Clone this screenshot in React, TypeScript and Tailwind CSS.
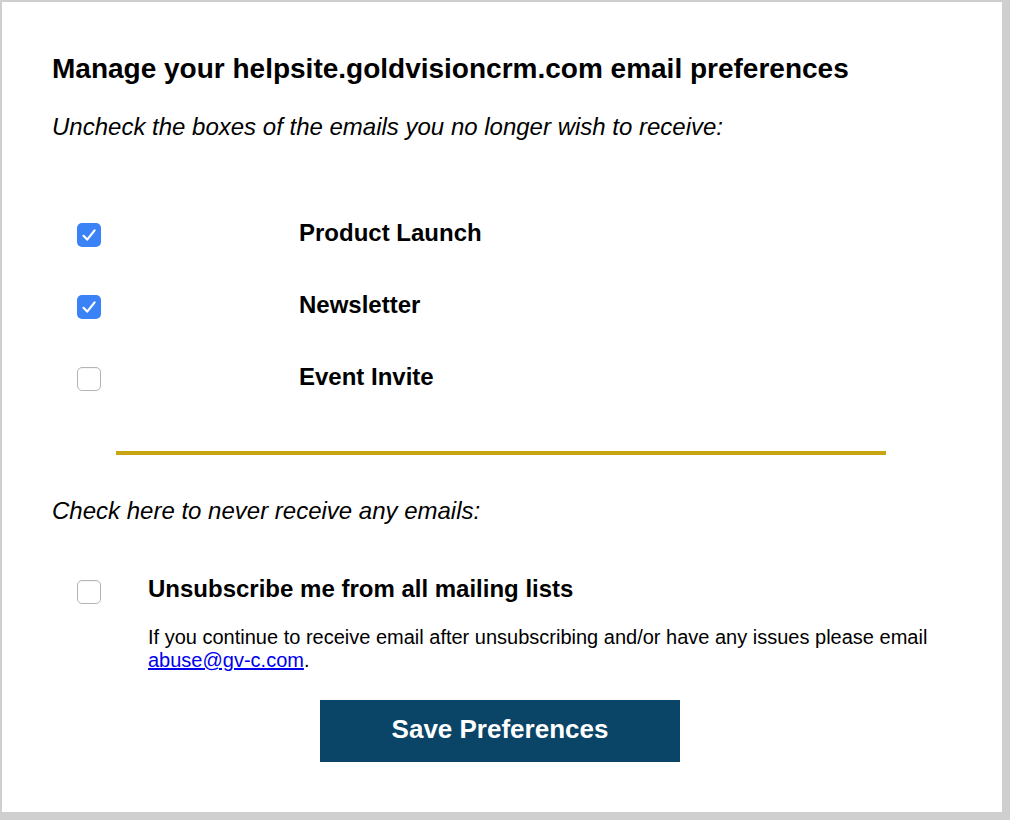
import React from "react";

const font = { fontFamily: '"Liberation Sans", Arial, Helvetica, sans-serif' };

function Box({ checked }: { checked: boolean }) {
  if (checked)
    return (
      <span className="mt-[4px] ml-[25px] flex h-[24px] w-[24px] shrink-0 items-center justify-center rounded-[5px] bg-[#3b82f6]">
        <svg width="24" height="24" viewBox="0 0 24 24" fill="none">
          <path d="M6.5 12.8 L10.2 16.6 L17.6 7.4" stroke="white" strokeWidth="2.2" strokeLinecap="round" strokeLinejoin="round" />
        </svg>
      </span>
    );
  return (
    <span className="mt-[4px] ml-[25px] block h-[24px] w-[24px] shrink-0 rounded-[5px] border border-[#b4b4b4] bg-white shadow-[inset_0_1px_1px_rgba(0,0,0,0.04)]" />
  );
}

const topics = [
  { name: "Product Launch", checked: true },
  { name: "Newsletter", checked: true },
  { name: "Event Invite", checked: false },
];

export default function App() {
  return (
    <div className="h-[820px] w-[1010px] bg-[#cfcfcf] pl-[2px] pt-[2px] pr-[8px] pb-[8px]" style={font}>
      <div className="h-full w-full bg-white pl-[50px] pr-[40px] pt-[51px] text-black">
        <h1 className="text-[28px] font-bold leading-[32px]">
          Manage your helpsite.goldvisioncrm.com email preferences
        </h1>
        <p className="mt-[28px] text-[24px] italic leading-[28px]">
          Uncheck the boxes of the emails you no longer wish to receive:
        </p>

        <div className="mt-[78px] flex flex-col gap-[44px]">
          {topics.map((t) => (
            <label key={t.name} className="flex items-start">
              <Box checked={t.checked} />
              <span className="ml-[198px] text-[24px] font-bold leading-[28px]">{t.name}</span>
            </label>
          ))}
        </div>

        <div className="mt-[60px] ml-[64px] h-[4px] w-[770px] bg-[#c8a613]" />

        <p className="mt-[42px] text-[24px] italic leading-[28px]">
          Check here to never receive any emails:
        </p>

        <div className="mt-[50px] flex items-start">
          <span className="mt-[1px]">
            <Box checked={false} />
          </span>
          <div className="ml-[47px]">
            <div className="text-[24px] font-bold leading-[28px]">Unsubscribe me from all mailing lists</div>
            <p className="mt-[23px] text-[20px] leading-[23px]">
              If you continue to receive email after unsubscribing and/or have any issues please email{" "}
              <br />
              <a href="#" className="text-[#0000ee] underline">abuse@gv-c.com</a>.
            </p>
          </div>
        </div>

        <button className="mt-[28px] ml-[268px] flex h-[62px] w-[360px] items-center justify-center bg-[#0a4466] pb-[3px] text-[26px] font-bold text-white">
          Save Preferences
        </button>
      </div>
    </div>
  );
}
